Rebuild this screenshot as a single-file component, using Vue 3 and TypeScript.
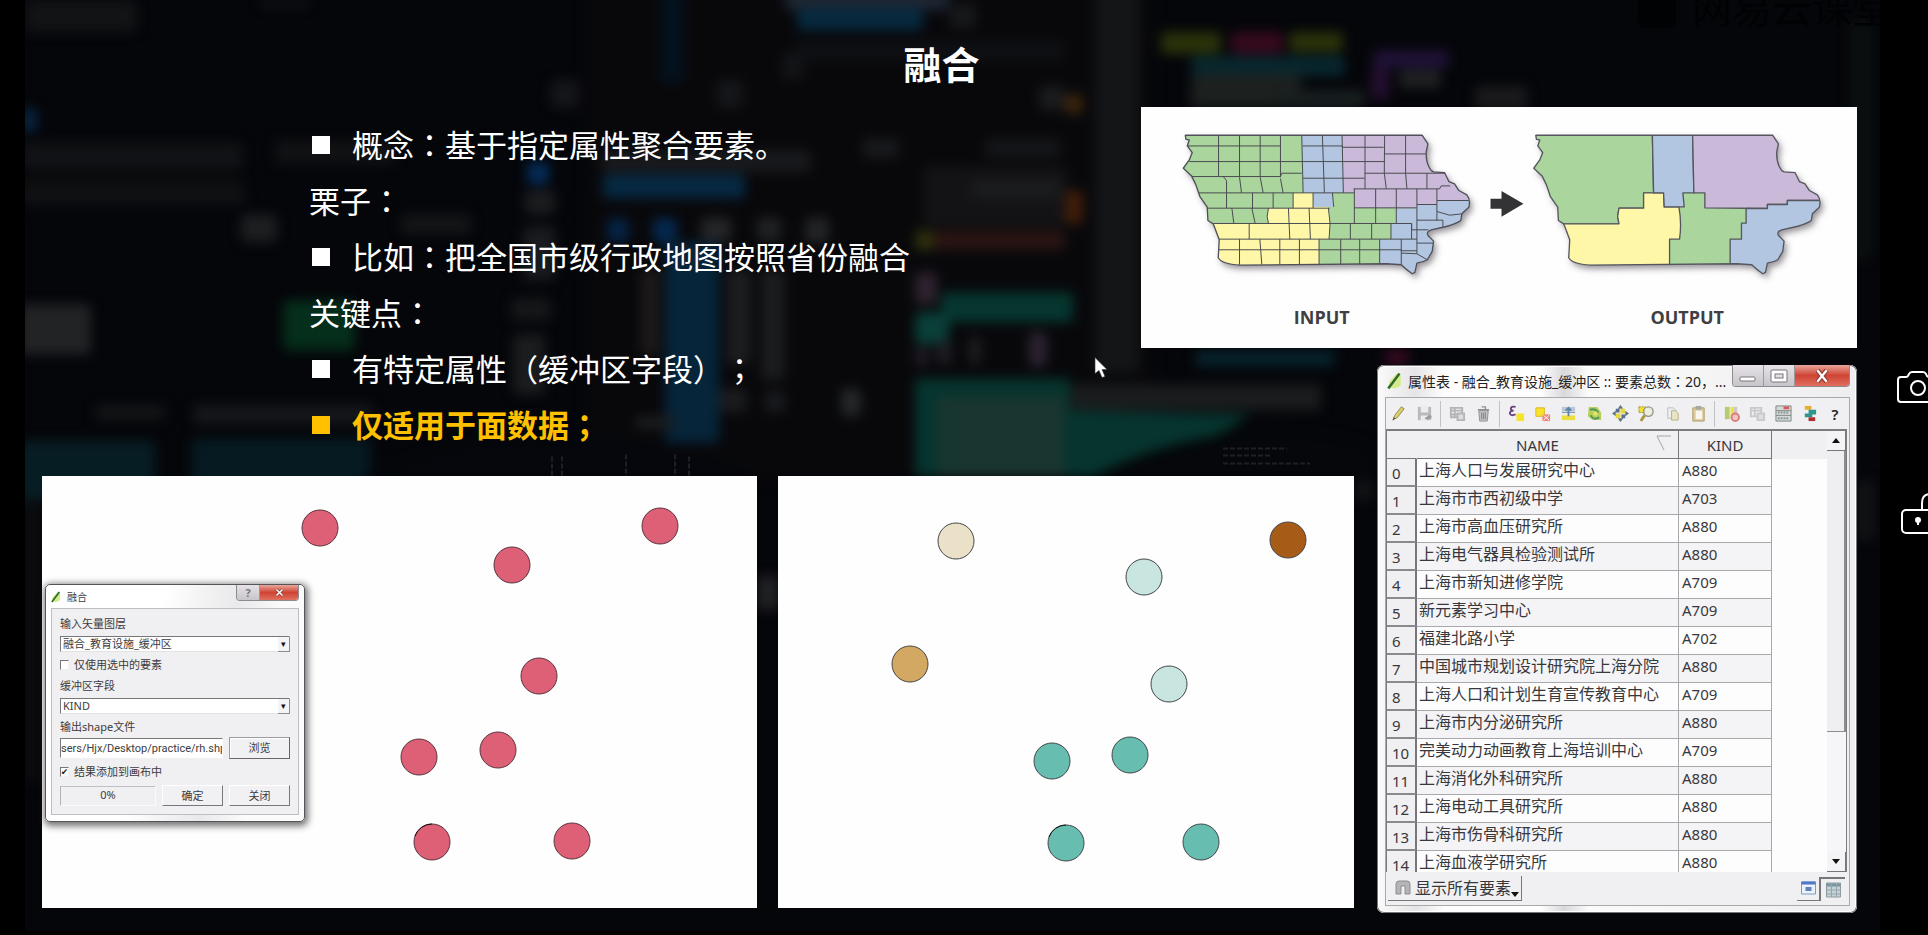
<script setup lang="ts">
import { ref } from 'vue'

interface Line { text: string; bullet: boolean; accent?: boolean }
interface Dot { x: number; y: number; fill: string }
interface Blob { x: number; y: number; w: number; h: number; c: string }

const lines: Line[] = [
  { text: '概念：基于指定属性聚合要素。', bullet: true },
  { text: '栗子：', bullet: false },
  { text: '比如：把全国市级行政地图按照省份融合', bullet: true },
  { text: '关键点：', bullet: false },
  { text: '有特定属性（缓冲区字段）；', bullet: true },
  { text: '仅适用于面数据；', bullet: true, accent: true },
]
// Colons and semicolons use the font that centres them in their cell.
const split = (t: string): string[] => t.split(/([：；])/).filter(Boolean)
const isMark = (p: string): boolean => /^[：；]$/.test(p)

const caption = '属性表 - 融合_教育设施_缓冲区 :: 要素总数：20，...'

const rows: [string, string][] = [
  ['上海人口与发展研究中心', 'A880'],
  ['上海市市西初级中学', 'A703'],
  ['上海市高血压研究所', 'A880'],
  ['上海电气器具检验测试所', 'A880'],
  ['上海市新知进修学院', 'A709'],
  ['新元素学习中心', 'A709'],
  ['福建北路小学', 'A702'],
  ['中国城市规划设计研究院上海分院', 'A880'],
  ['上海人口和计划生育宣传教育中心', 'A709'],
  ['上海市内分泌研究所', 'A880'],
  ['完美动力动画教育上海培训中心', 'A709'],
  ['上海消化外科研究所', 'A880'],
  ['上海电动工具研究所', 'A880'],
  ['上海市伤骨科研究所', 'A880'],
  ['上海血液学研究所', 'A880'],
]

const before: Dot[] = [[278, 52], [618, 50], [470, 89], [497, 200], [377, 281], [456, 274], [390, 366], [530, 365]]
  .map(([x, y]) => ({ x, y, fill: '#dd6076' }))
const after: Dot[] = [
  { x: 178, y: 65, fill: '#ebe1c8' }, { x: 510, y: 64, fill: '#a65b17' },
  { x: 366, y: 101, fill: '#c9e5df' }, { x: 132, y: 188, fill: '#d3a862' },
  { x: 391, y: 208, fill: '#c9e5df' }, { x: 274, y: 285, fill: '#66bdb0' },
  { x: 352, y: 279, fill: '#66bdb0' }, { x: 288, y: 367, fill: '#66bdb0' },
  { x: 423, y: 366, fill: '#66bdb0' },
]

const tools: { id: string; name: string }[] = [
  { id: 'pencil', name: '编辑' }, { id: 'save', name: '保存' }, { id: 'sep', name: '' },
  { id: 'addrow', name: '添加要素' }, { id: 'trash', name: '删除' }, { id: 'sep', name: '' },
  { id: 'expr', name: '表达式选择' }, { id: 'unselect', name: '取消选择' }, { id: 'top', name: '移到顶部' },
  { id: 'invert', name: '反选' }, { id: 'pan', name: '平移到选择' }, { id: 'zoom', name: '缩放到选择' },
  { id: 'copy', name: '复制' }, { id: 'paste', name: '粘贴' }, { id: 'sep', name: '' },
  { id: 'delcol', name: '删除列' }, { id: 'newcol', name: '新建列' }, { id: 'calc', name: '字段计算器' },
  { id: 'cond', name: '条件格式' }, { id: 'help', name: '帮助' },
]

const b = (x: number, y: number, w: number, h: number, c: string): Blob => ({ x, y, w, h, c })
const blobs: Blob[] = [
  b(0, 0, 112, 32, '#121315'), b(235, 0, 50, 6, '#151618'), b(636, -10, 22, 92, '#04121f'),
  b(760, -10, 164, 20, '#1e2632'), b(772, 8, 126, 22, '#06293f'), b(770, 40, 270, 22, '#0e0f12'),
  b(925, 4, 26, 24, '#17181a'), b(1070, -10, 44, 382, '#131517'), b(526, 80, 28, 28, '#151619'),
  b(692, 80, 26, 28, '#151619'), b(758, 52, 20, 28, '#131417'), b(1014, 86, 26, 24, '#1a1b1d'),
  b(1040, 94, 18, 20, '#3a240a'),
  b(1136, 32, 60, 22, '#2a320a'), b(1206, 32, 52, 22, '#360a1e'), b(1264, 32, 54, 20, '#2a320a'),
  b(1166, 56, 154, 20, '#08272e'), b(1348, 50, 76, 18, '#1f1236'), b(1166, 74, 110, 34, '#1c201f'),
  b(1374, 70, 42, 18, '#202123'), b(1346, 66, 18, 34, '#240f30'), b(1250, 90, 90, 18, '#181f1f'),
  b(1450, 86, 52, 24, '#1a1a1c'), b(1825, 20, 22, 240, '#0a100f'),
  b(-4, 108, 16, 24, '#072440'), b(-4, 143, 222, 12, '#131416'), b(-4, 158, 222, 8, '#191b1d'),
  b(-4, 178, 222, 3, '#1e2016'), b(-4, 186, 224, 18, '#111214'), b(250, 140, 120, 24, '#111214'),
  b(216, 214, 36, 28, '#1c1e20'), b(376, 214, 70, 20, '#141517'),
  b(576, 150, 210, 22, '#18191c'), b(578, 174, 142, 24, '#062942'), b(502, 162, 22, 22, '#042c58'),
  b(838, 138, 36, 20, '#18191c'), b(960, 138, 76, 20, '#141518'),
  b(500, 190, 30, 24, '#1b1d1f'), b(498, 226, 32, 54, '#1a1b1e'), b(486, 298, 40, 22, '#161719'),
  b(488, 334, 32, 60, '#1b1c1e'), b(582, 218, 22, 24, '#052344'), b(628, 218, 24, 24, '#05284e'),
  b(676, 217, 30, 24, '#242527'), b(732, 217, 24, 24, '#202123'), b(780, 217, 24, 26, '#222325'),
  b(640, 242, 54, 200, '#06253a'), b(616, 270, 18, 84, '#1e1a1b'), b(702, 270, 24, 94, '#1c1d1e'),
  b(736, 270, 24, 110, '#1b1c1d'), b(694, 388, 28, 24, '#1a1b1d'), b(740, 390, 20, 22, '#191a1d'),
  b(816, 388, 20, 28, '#242628'), b(610, 416, 40, 12, '#1b1d1f'),
  b(898, 166, 144, 60, '#131315'), b(946, 180, 90, 18, '#1b1c1e'), b(890, 230, 20, 20, '#2e2e0c'),
  b(910, 230, 130, 20, '#291413'), b(1040, 190, 18, 34, '#401d08'),
  b(890, 272, 22, 32, '#2e222e'), b(916, 292, 132, 30, '#06362f'), b(890, 312, 34, 32, '#0a3f38'),
  b(890, 346, 14, 20, '#201a24'), b(912, 340, 14, 24, '#201f24'), b(944, 336, 12, 28, '#1e1e22'),
  b(1004, 332, 18, 34, '#2b2330'),
  b(258, 300, 72, 50, '#052e1b'), b(-6, 304, 72, 50, '#212325'),
  b(70, 404, 70, 16, '#131416'), b(168, 404, 180, 20, '#15171a'),
  b(-6, 440, 136, 60, '#071d24'), b(166, 438, 180, 60, '#061a21'), b(400, 462, 30, 14, '#0a3522'),
  b(1046, 384, 250, 26, '#1a1c1d'), b(1170, 350, 140, 16, '#07222c'), b(1360, 350, 24, 14, '#3a0a24'),
  b(732, 575, 22, 34, '#202123'), b(1330, 480, 18, 20, '#131416'), b(-4, 500, 20, 280, '#0b0c0e'),
  b(1832, 480, 18, 60, '#121315'),
]

const onlySelected = ref(false)
const addResult = ref(true)
const layer = ref('融合_教育设施_缓冲区')
const field = ref('KIND')
const output = ref('sers/Hjx/Desktop/practice/rh.shp')
const outline = 'M166 106H878L895 132L890 155Q888 190 905 212L912 216L945 218L958 245L975 252L988 272L1012 285Q1024 300 1018 322L997 342L994 362Q980 372 950 380L905 390Q888 396 896 408L912 424L908 455L893 480Q880 488 862 490L856 518L848 522Q830 510 815 495L770 492L330 496Q275 493 265 474L268 420L250 372L234 362L232 322L210 290L198 255L185 228L160 205L178 180L187 158L172 138L178 120L168 118Z'
const zones: { d: string; fill: string }[] = [
  { d: 'M140 90H516L520 279H490V325H416L412 350L416 372H140Z', fill: '#aad59c' },
  { d: 'M140 372H416L412 350L416 325H490V279H550L552 321H596Q605 370 598 418H568V510H140Z', fill: '#fff7a8' },
  { d: 'M516 90H637L641 279H608L612 321H552L550 279H520Z', fill: '#b2c6e2' },
  { d: 'M637 90H1050V302H922V314H862V326L674 324V279H641Z', fill: '#cab9d9' },
  { d: 'M750 540V418H784V370H798V326H862V314H922V302H1050V540Z', fill: '#b2c6e2' },
]
const counties = 'M170 138H452M518 138H638V142H762M765 162H892M178 185H765M186 230H452L456 220H516M520 235H705M705 220H948M672 267H930L935 258H962M198 279H674M232 325H600M674 324H862M250 371H846V390M265 418H862M266 450H815V453H862M266 106V230M329 106V230M391 106V230M452 106V232M516 106L520 279M578 106L584 279M637 106L641 279M706 106V267M765 106L764 220L770 267M828 106V220L832 267M892 220V267M280 230L290 242V325M329 232L335 279M391 232L400 279M452 236L460 279M368 279V325M430 279V325M490 279V325M550 279V325M608 279L612 321M306 325L312 371M366 325L376 371M416 325L412 350L416 371M476 325L480 418M538 325L542 418M596 325Q605 370 598 418M674 267V371M738 267V371M800 267V371M862 267V390M922 267V362M358 371V418M662 371V418M726 371V418M784 371V418M846 371V418M329 418V495M390 418L396 495M450 418V495M509 418V495M568 418V495M633 418V495M690 418V495M750 418V495M815 418V495M862 390V462M922 302H1018M862 314H922M862 361H940V380M922 335L960 346L998 342M846 390H896M862 430H910M815 460L862 462L893 480'
</script>

<template>
  <div class="stage">
    <main class="slide">
      <svg class="backdrop" viewBox="0 0 1855 930" preserveAspectRatio="none" aria-hidden="true">
        <defs><filter id="soft" x="-5%" y="-5%" width="110%" height="110%" color-interpolation-filters="sRGB"><feGaussianBlur stdDeviation="6" /></filter></defs>
        <rect width="1855" height="930" fill="#05060a" />
        <g filter="url(#soft)">
          <path d="M560 -20H1130V480H560Z" fill="#08080b" />
          <rect v-for="(k, i) in blobs" :key="i" :x="k.x" :y="k.y" :width="k.w" :height="k.h" rx="5" :fill="k.c" />
          <path d="M890 378H1045V410L1225 414Q1180 450 1080 476H890Z" fill="#06342e" />
          <path d="M912 396H1040V476H912Z" fill="#193530" />
          <path d="M330 480Q420 436 530 436T745 480Z" fill="#05070c" />
          <path d="M1060 480Q1150 432 1240 432T1350 450V480Z" fill="#05070a" />
        </g>
        <g fill="none" stroke="#1c2024" stroke-width="2" stroke-dasharray="5 2">
          <path d="M1198 448H1262M1198 455H1246M1198 463H1285" />
          <path d="M527 456V476M537 456V476M601 454V478M650 454V478M664 456V476" />
        </g>
      </svg>

      <div class="brand" aria-hidden="true"><i></i><span>网易云课堂</span></div>

      <header class="head"><h1>融合</h1></header>

      <div class="board">
        <ul class="notes">
          <li v-for="l in lines" :key="l.text" :class="{ accent: l.accent }">
            <span v-if="l.bullet" class="square"></span>
            <span><span v-for="(p, i) in split(l.text)" :key="i" :class="{ mark: isMark(p) }">{{ p }}</span></span>
          </li>
        </ul>

        <figure class="maps">
          <svg viewBox="0 0 717 241" role="img" aria-label="INPUT OUTPUT">
            <defs>
              <clipPath id="shape"><path :d="outline" /></clipPath>
              <filter id="cast" x="-10%" y="-10%" width="125%" height="130%">
                <feDropShadow dx="9" dy="12" stdDeviation="9" flood-color="#4a4048" flood-opacity=".55" />
              </filter>
            </defs>
            <g transform="translate(-11 -7) scale(.3333)" stroke-linejoin="round">
              <path :d="outline" fill="#aad59c" filter="url(#cast)" />
              <g clip-path="url(#shape)">
                <path v-for="z in zones" :key="z.d" :d="z.d" :fill="z.fill" />
                <path :d="counties" fill="none" stroke="#4a4b50" stroke-width="3" />
              </g>
              <path :d="outline" fill="none" stroke="#4f5058" stroke-width="4" />
            </g>
            <g transform="translate(340 -7) scale(.3333)" stroke-linejoin="round">
              <path :d="outline" fill="#aad59c" filter="url(#cast)" />
              <g clip-path="url(#shape)" stroke="#55565e" stroke-width="4">
                <path v-for="z in zones" :key="z.d" :d="z.d" :fill="z.fill" />
              </g>
              <path :d="outline" fill="none" stroke="#55565e" stroke-width="4" />
            </g>
            <path d="M350 92H361V84L383 97L361 110V102H350Z" fill="#333336" />
            <text x="181" y="217" text-anchor="middle">INPUT</text>
            <text x="547" y="217" text-anchor="middle">OUTPUT</text>
          </svg>
        </figure>

        <section class="canvas left">
          <svg viewBox="0 0 715 432">
            <circle v-for="(d, i) in before" :key="i" :cx="d.x" :cy="d.y" r="18" :fill="d.fill" stroke="#5a3540" stroke-width="1" />
            <path d="M373 360A18 18 0 0 1 390 348" fill="none" stroke="#1c1014" stroke-width="1" />
          </svg>

          <form class="dialog" @submit.prevent>
            <div class="dlg-title">
              <svg class="logo" viewBox="0 0 12 14"><path d="M2 7L8 1L11 3V11L6 13L1 12Z" fill="#d4ea8c" /><path d="M1 13L10 1" stroke="#2c6b2a" stroke-width="2" /></svg>
              <span>融合</span>
              <div class="winbtns">
                <button type="button" class="wb ask" aria-label="帮助">?</button>
                <button type="button" class="wb shut" aria-label="关闭窗口"><svg viewBox="0 0 12 12"><path d="M2 2L10 10M10 2L2 10" stroke="#8b3a30" stroke-width="4" /><path d="M2 2L10 10M10 2L2 10" stroke="#fff" stroke-width="2" /></svg></button>
              </div>
            </div>
            <div class="dlg-body">
              <label for="layer">输入矢量图层</label>
              <div class="combo"><select id="layer" v-model="layer"><option>融合_教育设施_缓冲区</option></select></div>
              <label class="tick"><input v-model="onlySelected" type="checkbox"><span>仅使用选中的要素</span></label>
              <label for="field">缓冲区字段</label>
              <div class="combo"><select id="field" v-model="field"><option>KIND</option></select></div>
              <label for="out">输出shape文件</label>
              <div class="pair path"><input id="out" v-model="output" type="text"><button type="button" class="push strong">浏览</button></div>
              <label class="tick"><input v-model="addResult" type="checkbox"><span>结果添加到画布中</span></label>
              <div class="pair foot"><div class="progress">0%</div><button type="submit" class="push">确定</button><button type="button" class="push">关闭</button></div>
            </div>
          </form>
        </section>

        <section class="canvas right">
          <svg viewBox="0 0 576 432">
            <circle v-for="(d, i) in after" :key="i" :cx="d.x" :cy="d.y" r="18" :fill="d.fill" stroke="#45474a" stroke-width="1" />
            <path d="M271 361A18 18 0 0 1 288 349" fill="none" stroke="#101818" stroke-width="1" />
          </svg>
        </section>

        <section class="table-window">
          <div class="tw-title">
            <svg class="logo" viewBox="0 0 12 14"><path d="M2 7L8 1L11 3V11L6 13L1 12Z" fill="#d4ea8c" /><path d="M1 13L10 1" stroke="#2c6b2a" stroke-width="2" /></svg>
            <span class="caption"><span v-for="(p, i) in split(caption)" :key="i" :class="{ mark: isMark(p) }">{{ p }}</span></span>
            <div class="winbtns">
              <button type="button" class="wb" aria-label="最小化"><svg viewBox="0 0 18 14"><rect x="1" y="8" width="15" height="4" rx="1" fill="#fff" stroke="#77747a" /></svg></button>
              <button type="button" class="wb" aria-label="最大化"><svg viewBox="0 0 18 14"><rect x="1" y="1" width="16" height="12" rx="1" fill="#fff" stroke="#77747a" /><rect x="5" y="5" width="8" height="4" fill="#e4e0e6" stroke="#77747a" /></svg></button>
              <button type="button" class="wb shut" aria-label="关闭窗口"><svg viewBox="0 0 12 12"><path d="M2 1L10 11M10 1L2 11" stroke="#8b3a30" stroke-width="4" /><path d="M2 1L10 11M10 1L2 11" stroke="#fff" stroke-width="2" /></svg></button>
            </div>
          </div>

          <div class="tw-frame">
            <div class="toolbar">
              <template v-for="(t, i) in tools" :key="i">
                <span v-if="t.id === 'sep'" class="sep"></span>
                <button v-else-if="t.id === 'help'" type="button" class="q" :aria-label="t.name">?</button>
                <button v-else type="button" :aria-label="t.name">
                  <svg viewBox="0 0 18 18">
                    <g v-if="t.id === 'pencil'"><path d="M3 16L5 11L12 2L15 4L8 13Z" fill="#dcd06a" stroke="#8f8748" /><path d="M3 16L4 13L6 14Z" fill="#555" /></g>
                    <g v-else-if="t.id === 'save'"><path d="M2 2H16V16H2Z" fill="#b9b9bb" /><path d="M5 2H13V8H5ZM5 11H13V16H5Z" fill="#ececee" /><path d="M9 14L15 10L17 13L12 16Z" fill="#9c9c9e" /></g>
                    <g v-else-if="t.id === 'addrow'" fill="none" stroke="#b4b4b6"><path d="M2 3H14V13H2ZM2 6H14M2 10H9M6 3V13" stroke-width="2" /><path d="M9 9H16V16H9Z" fill="#dcdcde" stroke-width="2" /></g>
                    <g v-else-if="t.id === 'trash'"><path d="M4 6H14L13 17H5Z" fill="#c5c5c7" stroke="#8f8f91" /><path d="M3 5H15M7 2H11V5M7 8V15M9 8V15M11 8V15" fill="none" stroke="#8f8f91" stroke-width="1.4" /></g>
                    <g v-else-if="t.id === 'expr'"><path d="M8 2Q3 1 3 4Q3 6 6 6Q2 6 2 9Q3 12 8 10" fill="none" stroke="#68407f" stroke-width="2" /><path d="M9 9H17V17H9Z" fill="#f5e428" /></g>
                    <g v-else-if="t.id === 'unselect'"><path d="M2 3H11V12H2Z" fill="#f8e32a" stroke="#d9b52a" /><path d="M9 10H17V17H9Z" fill="#e8867e" /><path d="M10 11L16 16M16 11L10 16" stroke="#fff" /></g>
                    <g v-else-if="t.id === 'top'"><path d="M2 2H16V7H2Z" fill="#b9c8d4" /><path d="M2 11H16V16H2Z" fill="#eadf3c" /><path d="M2 8H16" stroke="#7e96a8" /><path d="M9 12V3M6 6L9 3L12 6" fill="none" stroke="#5f86a8" stroke-width="2" /></g>
                    <g v-else-if="t.id === 'invert'"><path d="M3 2H12L16 8V16H7L2 12Z" fill="#b5cf58" /><path d="M4 5Q10 3 13 8M14 13Q8 17 5 11" fill="none" stroke="#4e9660" stroke-width="2" /><path d="M8 7H12V11H8Z" fill="#e9e56a" /></g>
                    <g v-else-if="t.id === 'pan'"><path d="M9 0L12 4H6ZM9 18L12 14H6ZM0 9L4 6V12ZM18 9L14 6V12Z" fill="#5f7280" /><path d="M4 4H8V8H4ZM10 10H14V14H10Z" fill="#566f94" /><path d="M9 4H14V9H9ZM4 9H9V14H4Z" fill="#e6d73e" /></g>
                    <g v-else-if="t.id === 'zoom'"><path d="M1 2H8V8H1Z" fill="#f2e22e" stroke="#9a9032" stroke-dasharray="2 1" /><circle cx="11" cy="7" r="5" fill="#eeeedd" stroke="#94948a" stroke-width="1.5" /><path d="M7 11L3 17" stroke="#a8973a" stroke-width="3" /></g>
                    <g v-else-if="t.id === 'copy'"><path d="M4 3H10L13 6V14H4Z" fill="#efefef" stroke="#bcbcbc" /><path d="M8 6H12L15 9V16H8Z" fill="#e9e5c0" stroke="#b5b08c" /></g>
                    <g v-else-if="t.id === 'paste'"><path d="M3 3H15V17H3Z" fill="#dcc99a" stroke="#b09a66" /><path d="M6 6H13V15H6Z" fill="#f8f5ec" /><path d="M6 1H12V5H6Z" fill="#a9a9a4" /></g>
                    <g v-else-if="t.id === 'delcol'"><path d="M2 2H7V15H2Z" fill="#b4cc72" /><path d="M8 2H11V14H8Z" fill="#efe243" /><path d="M11 2H15V11H11Z" fill="#c9c9c9" /><circle cx="13" cy="13" r="4" fill="#f3c5c4" stroke="#dd7b7b" stroke-width="2" /></g>
                    <g v-else-if="t.id === 'newcol'" fill="none" stroke="#c9c9cb"><path d="M2 3H13V12H2ZM2 6H13M6 3V12" stroke-width="2" /><path d="M9 9H16V16H9Z" fill="#dedee0" stroke-width="2" /></g>
                    <g v-else-if="t.id === 'calc'"><path d="M1 1H17V17H1Z" fill="#d5dad9" stroke="#7d8583" /><path d="M1 6H17M1 11H17" stroke="#7d8583" /><path d="M9 3H15" stroke="#d65a5a" stroke-width="3" /><path d="M3 8H15M3 14H15" stroke="#8a9795" stroke-width="2" stroke-dasharray="2 1" /></g>
                    <g v-else><path d="M4 1H11V5H4Z" fill="#e6ae2c" /><path d="M8 5H16V10H8ZM4 9H12V13H4Z" fill="#2f968c" /><path d="M8 13H15V17H8Z" fill="#b02c28" /></g>
                  </svg>
                </button>
              </template>
            </div>

            <div class="grid-area">
              <div class="table-clip">
                <table>
                  <thead>
                    <tr><th class="c-id"></th><th class="c-name">NAME<svg viewBox="0 0 16 16"><path d="M1 1H15M1 1L8 15" fill="none" stroke="#a5a3a6" /></svg></th><th class="c-kind">KIND</th><th class="c-rest"></th></tr>
                  </thead>
                  <tbody>
                    <tr v-for="(r, i) in rows" :key="r[0]"><th scope="row">{{ i }}</th><td>{{ r[0] }}</td><td>{{ r[1] }}</td><td class="rest"></td></tr>
                  </tbody>
                </table>
              </div>
              <div class="scroll">
                <button type="button" aria-label="向上滚动"><i class="tri up"></i></button>
                <div class="thumb"></div>
                <div class="track"></div>
                <button type="button" aria-label="向下滚动"><i class="tri down"></i></button>
              </div>
            </div>

            <div class="status">
              <button type="button" class="filter">
                <svg viewBox="0 0 16 16"><path d="M1 14V4Q1 1 4 1H12Q15 1 15 4V14H10V6H6V14Z" fill="#b4b4b6" stroke="#8d8d8f" /></svg>
                <span>显示所有要素</span><i class="tri down"></i>
              </button>
              <div class="views">
                <button type="button" aria-label="表单视图"><svg viewBox="0 0 16 16"><path d="M1 2H15V14H1Z" fill="#eaf1fb" stroke="#7b9bd0" /><path d="M1 3H15" stroke="#5077c8" stroke-width="3" /><path d="M5 7H11V11H5Z" fill="#5f83b8" /></svg></button>
                <button type="button" class="on" aria-label="表格视图"><svg viewBox="0 0 16 16"><path d="M1 1H15V15H1Z" fill="#c3d2d6" stroke="#8b9a9e" /><path d="M1 3H15" stroke="#7897a2" stroke-width="3" /><path d="M6 1V15M11 1V15M1 8H15M1 12H15" stroke="#94a6aa" /></svg></button>
              </div>
            </div>
          </div>
        </section>
      </div>

      <svg class="pointer" viewBox="0 0 14 22" aria-hidden="true"><path d="M1 1V17L5 14L8 21L11 20L8 13H13Z" fill="#fff" stroke="#333" stroke-width=".6" /></svg>
    </main>

    <nav class="rail">
      <button type="button" aria-label="截图">
        <svg viewBox="0 0 42 34"><path d="M4 7H9Q11 7 12 4Q13 2 15 2H26Q28 2 29 4Q30 7 32 7H37Q40 7 40 10V29Q40 32 37 32H4Q1 32 1 29V10Q1 7 4 7Z" /><circle cx="21" cy="18" r="7" /></svg>
      </button>
      <button type="button" aria-label="解锁">
        <svg viewBox="0 0 42 42"><rect x="5" y="17" width="32" height="23" rx="4" /><path d="M25 17V10Q25 1 33 1T41 10" /><circle cx="21" cy="27" r="2" fill="#fff" /><path d="M21 27V32" /></svg>
      </button>
    </nav>
  </div>
</template>

<style>
body { margin: 0; background: #000; }
</style>

<style scoped>
* { box-sizing: border-box; }
.stage { display: flex; min-height: 100vh; padding: 0 0 5px 25px; background: #000; overflow: hidden; font-family: "Noto Sans", "Noto Sans CJK SC", sans-serif; text-spacing-trim: space-all; }
button { font-family: inherit; padding: 0; margin: 0; border: 0; background: none; color: inherit; }
svg { display: block; }
.slide { position: relative; flex: 1; min-width: 0; overflow: hidden; padding: 0 23px 18px 17px; }
.backdrop { position: absolute; inset: 0; width: 100%; height: 100%; }
.brand { position: absolute; top: -18px; right: -12px; display: flex; align-items: center; gap: 16px; height: 48px; font: 400 40px/48px "Noto Sans CJK SC", sans-serif; color: #010203; }
.brand i { width: 38px; height: 44px; border-radius: 8px; background: #010203; }
.head { position: relative; height: 107px; padding: 35px 16px 0 0; }
h1 { margin: 0; text-align: center; color: #fff; font: 700 38px/56px "Noto Sans CJK SC", sans-serif; }
.board { position: relative; display: grid; grid-template-columns: 715fr 21px 363fr 213fr 23px 480fr; grid-template-rows: 241px 17px 111px auto; align-items: start; }
.notes { grid-area: 1 / 1 / 4 / 4; list-style: none; margin: 0; padding: 9px 0 0 267px; color: #fff; font: 400 31px/56px "Noto Sans CJK SC", sans-serif; }
.notes li { display: flex; align-items: center; height: 56px; white-space: nowrap; }
.notes .accent { color: #ffc000; font-weight: 700; }
.square { flex: none; width: 18px; height: 18px; margin: 2px 22px 0 3px; background: currentColor; }
.mark { font-family: "Noto Sans CJK TC", sans-serif; }
.maps { grid-area: 1 / 4 / 2 / 7; margin: 0; background: #fefefe; }
.maps svg { width: 100%; height: auto; }
.maps text { font: 700 18px "Open Sans", sans-serif; fill: #3f3f43; }
.canvas { position: relative; background: #fefefe; }
.canvas > svg { width: 100%; height: auto; }
.left { grid-area: 4 / 1 / 5 / 2; }
.right { grid-area: 4 / 3 / 5 / 5; }

.dialog { position: absolute; left: 3px; top: 108px; width: 260px; padding: 0 5px 6px; border: 1px solid #555559; border-radius: 5px; background: linear-gradient(100deg, #fff 40%, #e9e8ea 65%, #fbfbfb 80%); box-shadow: 1px 2px 7px 2px rgba(40, 36, 42, .65); color: #3c3c40; font-size: 11px; line-height: 16px; }
.dlg-title { display: flex; align-items: center; gap: 6px; height: 23px; font-size: 10px; }
.dlg-title .logo { width: 10px; height: 12px; }
.winbtns { display: flex; align-self: flex-start; margin-left: auto; border: 1px solid #8d8a90; border-top: 0; border-radius: 0 0 4px 4px; overflow: hidden; }
.wb { display: flex; align-items: center; justify-content: center; width: 31px; height: 21px; background: linear-gradient(#e6e2e8, #c7c4ca); border-right: 1px solid #9b989e; color: #fff; }
.wb svg { width: 18px; height: 14px; }
.wb.shut { width: 54px; border-right: 0; background: linear-gradient(#e9a79c, #cf4433 50%, #e0705f); }
.dialog .wb { width: 23px; height: 15px; font-size: 11px; font-weight: 700; color: #777; }
.dialog .wb.shut { width: 38px; }
.dialog .wb svg { width: 9px; height: 9px; }
.dlg-body { display: flex; flex-direction: column; padding: 7px 8px 8px; border: 1px solid #bebdc0; background: #f0eff1; }
.combo { position: relative; height: 16px; margin: 4px 0 5px; }
.combo select { display: block; appearance: none; width: 100%; height: 16px; padding: 0 14px 0 2px; border: 1px solid; border-color: #77767a #e2e2e2 #e2e2e2 #77767a; border-radius: 0; background: #fff; color: inherit; font: 11px/14px "Noto Sans", "Noto Sans CJK SC", sans-serif; }
.combo::after { content: "▾"; position: absolute; right: 0; top: 1px; width: 11px; height: 14px; border: solid #8d8c90; border-width: 0 1px 1px 0; background: #f4f3f5; color: #111; font-size: 9px; line-height: 13px; text-align: center; pointer-events: none; }
.tick { display: flex; align-items: center; gap: 5px; height: 16px; margin-bottom: 5px; }
.tick input { appearance: none; display: flex; align-items: center; justify-content: center; width: 9px; height: 10px; margin: 0; border: 1px solid; border-color: #77767a #f0eff1 #f0eff1 #77767a; background: #fff; color: #222; font-size: 9px; line-height: 9px; }
.tick input:checked::before { content: "✔"; font-family: "DejaVu Sans", sans-serif; }
.pair { display: flex; gap: 6px; align-items: center; }
.path { margin: 2px 0 5px; }
.path input { flex: 1; min-width: 0; height: 20px; padding: 0; border: 1px solid; border-color: #77767a #fff #fff #77767a; border-radius: 0; background: #fff; color: #3c3c40; font: 11px/18px Roboto, sans-serif; }
.push { width: 61px; height: 21px; border: 1px solid; border-color: #fff #77767a #77767a #fff; background: #f1f0f2; font-size: 11px; line-height: 16px; }
.push.strong { height: 22px; border-color: #9b9a9e #66656a #66656a #9b9a9e; box-shadow: inset 1px 1px #fff; }
.progress { flex: 1; height: 20px; border: 1px solid; border-color: #c0bfc2 #fafafa #fafafa #b4b3b6; text-align: center; }

.table-window { grid-area: 2 / 6 / 5 / 7; margin-top: 17px; min-width: 0; padding: 0 7px 7px 8px; border-radius: 7px; background: linear-gradient(90deg, #fbfbfb, #e6e4e6 8%, #fdfdfd 14%, #fff 34%, #d9d7da 39%, #fbfbfb 44%, #eeedef); box-shadow: inset 0 0 0 1px #77757a, inset 0 0 0 2px #fff; color: #38383c; }
.tw-title { display: flex; align-items: center; height: 32px; }
.tw-title .logo { width: 15px; height: 18px; margin-left: 2px; }
.caption { flex: 1; min-width: 0; margin-left: 6px; white-space: nowrap; font-size: 14px; line-height: 20px; color: #222; }
.tw-frame { border: 1px solid #a9a8ac; background: #f0eff1; }
.toolbar { display: flex; height: 31px; align-items: center; justify-content: space-between; padding-right: 2px; }
.toolbar button { display: flex; flex: none; align-items: center; justify-content: center; width: 24px; height: 26px; }
.toolbar svg { width: 17px; height: 17px; }
.toolbar .q { color: #222; font-size: 15px; font-weight: 600; line-height: 20px; }
.sep { flex: none; width: 1px; height: 26px; margin: 0 2px; background: #c2c1c5; }
.grid-area { display: flex; height: 443px; margin-right: 2px; border-top: 2px solid #7c7b80; border-left: 1px solid #7c7b80; border-right: 1px solid #7c7b80; }
.table-clip { flex: 1; min-width: 0; overflow: hidden; background: #fdfdfd; }
table { width: 100%; border-collapse: separate; border-spacing: 0; table-layout: fixed; }
thead th { position: relative; height: 28px; padding: 0; border-right: 1px solid #77767b; border-bottom: 1px solid #77767b; background: #f0eff1; font-size: 15px; font-weight: 400; line-height: 20px; }
thead .c-id { width: 30px; border-color: #f0eff1; border-bottom-color: #77767b; }
thead .c-name { padding-right: 20px; }
.c-kind { width: 93px; }
thead .c-rest { width: 55px; border: 0; }
.c-name svg { position: absolute; right: 6px; top: 4px; width: 16px; height: 16px; }
tbody th { height: 28px; padding: 2px 0 0 5px; border-right: 2px solid #77767b; border-bottom: 2px solid #8a898e; background: #f0eff1; text-align: left; font-size: 15px; font-weight: 400; line-height: 20px; }
tbody td { height: 28px; padding: 0 0 0 2px; border-right: 1px solid #a9a8ad; border-bottom: 1px solid #a9a8ad; font-size: 16px; line-height: 22px; vertical-align: top; white-space: nowrap; overflow: hidden; }
tbody td:nth-child(3) { padding-left: 3px; font-size: 15px; }
tbody tr:nth-child(even) td { background: #f4f3f5; }
tbody tr td.rest { border: 0; background: #fdfdfd; }
.scroll { display: flex; flex-direction: column; width: 19px; background: #f3f2f4; }
.scroll button { display: flex; flex: none; align-items: center; justify-content: center; height: 20px; border: solid #77767b; border-width: 0 1px 1px 0; background: #f4f3f5; }
.thumb { flex: 280; border: solid #8d8c90; border-width: 0 2px 1px 0; background: #efeef0; }
.track { flex: 120; background: #f6f5f7; }
.tri { width: 0; height: 0; border: 4px solid transparent; }
.tri.up { border-top: 0; border-bottom: 5px solid #111; }
.tri.down { border-bottom: 0; border-top: 5px solid #111; }
.status { display: flex; align-items: center; justify-content: space-between; height: 33px; padding: 0 4px 0 2px; }
.filter { display: flex; align-items: center; gap: 4px; height: 25px; padding: 0 2px 0 7px; border: solid #77767b; border-width: 0 1px 1px 0; font-size: 16px; line-height: 22px; }
.filter svg { width: 16px; height: 16px; }
.filter .tri { align-self: flex-end; margin: 0 0 3px -4px; }
.views { display: flex; }
.views button { display: flex; align-items: center; justify-content: center; width: 24px; height: 24px; border: solid #77767b; border-width: 0 2px 1px 0; }
.views button.on { border-width: 2px 0 0 0; }
.views svg { width: 17px; height: 16px; }

.pointer { position: absolute; left: 1069px; top: 356px; width: 14px; height: 23px; }
.rail { display: flex; flex: none; flex-direction: column; gap: 89px; width: 48px; padding: 370px 0 0 17px; overflow: hidden; }
.rail svg { width: 42px; height: auto; fill: none; stroke: #fff; stroke-width: 2; }
.rail button { width: 42px; }
</style>
